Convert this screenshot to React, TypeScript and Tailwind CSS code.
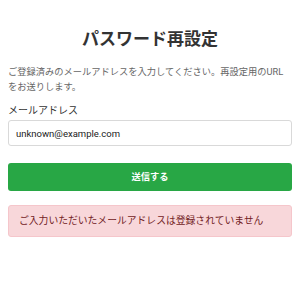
import React from 'react';

const App: React.FC = () => {
  return (
    <div className="min-h-screen bg-white px-2 pt-[28px] font-['Roboto','Noto_Sans_CJK_JP',sans-serif]">
      <h1 className="text-center text-[17px] leading-[22px] font-bold text-[#333333]">パスワード再設定</h1>

      <p className="mt-[14px] text-[9.25px] leading-[15px] text-[#666666]">
        ご登録済みのメールアドレスを入力してください。再設定用のURLをお送りします。
      </p>

      <form className="mt-[10px]" onSubmit={(e) => e.preventDefault()}>
        <label className="block text-[10px] leading-[14px] text-[#333333] mb-[2px]">メールアドレス</label>
        <input
          type="email"
          defaultValue="unknown@example.com"
          className="block w-full h-[26px] px-[7px] rounded-[3px] border border-[#d9d9d9] text-[9.5px] text-[#222222] outline-none"
        />
        <button
          type="submit"
          className="mt-[17px] w-full h-[28px] rounded-[3px] bg-[#28a745] text-white text-[9.25px] font-bold"
        >
          送信する
        </button>
      </form>

      <div className="mt-[14px] h-[32px] flex items-center px-[10px] rounded-[3px] bg-[#f8d7da] border border-[#f5c6cb] text-[9.8px] text-[#721c24]">
        ご入力いただいたメールアドレスは登録されていません
      </div>
    </div>
  );
};

export default App;
